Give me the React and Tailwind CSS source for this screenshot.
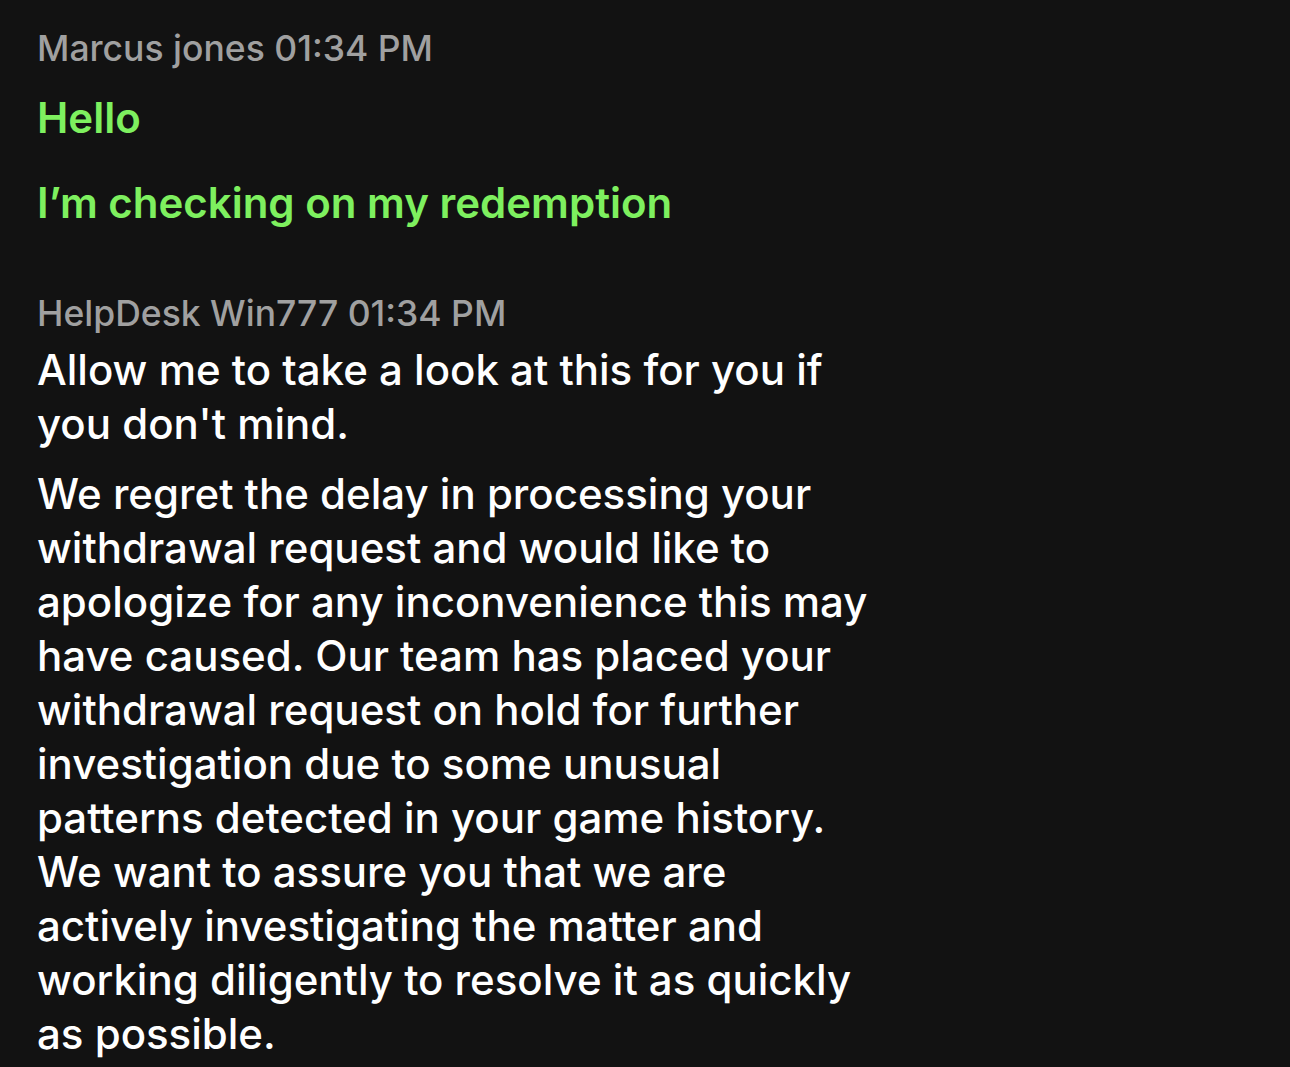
import React from 'react';

const messages = [
  {
    author: 'Marcus jones',
    time: '01:34 PM',
    tone: 'user',
    lines: ['Hello', 'I’m checking on my redemption'],
  },
  {
    author: 'HelpDesk Win777',
    time: '01:34 PM',
    tone: 'agent',
    lines: [
      "Allow me to take a look at this for you if you don't mind.",
      'We regret the delay in processing your withdrawal request and would like to apologize for any inconvenience this may have caused. Our team has placed your withdrawal request on hold for further investigation due to some unusual patterns detected in your game history. We want to assure you that we are actively investigating the matter and working diligently to resolve it as quickly as possible.',
    ],
  },
];

export default function App() {
  return (
    <div className="min-h-screen w-full bg-[#121212] px-[37px] pt-[27px] font-['Inter','Liberation_Sans',sans-serif] antialiased">
      {messages.map((m, i) => (
        <div key={i} className={i > 0 ? 'mt-[68px]' : ''}>
          <div className="text-[35.5px] leading-[44px] font-medium text-[#a0a0a0]">
            {m.author} {m.time}
          </div>
          {m.tone === 'user' ? (
            <div className="mt-[26px] flex flex-col gap-[43px]">
              {m.lines.map((l, j) => (
                <p key={j} className="text-[42px] leading-[42px] font-semibold text-[#7ef05f]">{l}</p>
              ))}
            </div>
          ) : (
            <div className="mt-[7px] flex max-w-[845px] flex-col gap-[16px]">
              {m.lines.map((l, j) => (
                <p key={j} className="text-[42px] leading-[54px] font-medium text-white">{l}</p>
              ))}
            </div>
          )}
        </div>
      ))}
    </div>
  );
}
